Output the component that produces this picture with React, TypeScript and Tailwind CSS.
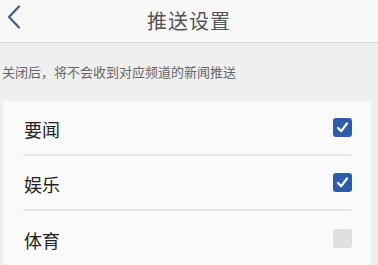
const channels = [
  { name: "要闻", on: true },
  { name: "娱乐", on: true },
  { name: "体育", on: false },
];

const font = {
  fontFamily: '"Noto Sans CJK SC", "Noto Sans", sans-serif',
};

export default function App() {
  return (
    <div className="w-[378px] h-[265px] overflow-hidden bg-[#efefef]" style={font}>
      <div className="relative h-[43px] bg-[#f8f8f8] border-b border-[#d6d6d6] flex items-center justify-center">
        <svg className="absolute left-[6px] top-[5px]" width="16" height="24" viewBox="0 0 16 24">
          <path d="M13 1.5 L3 12 L13 22.5" fill="none" stroke="#3d5f86" strokeWidth="2.2" strokeLinecap="round" strokeLinejoin="round" />
        </svg>
        <span className="text-[20px] text-[#555] tracking-[1px] leading-none">推送设置</span>
      </div>
      <div className="h-[58px] flex items-center pl-[2px] text-[13px] text-[#666]">
        关闭后，将不会收到对应频道的新闻推送
      </div>
      <div className="ml-[3px] w-[368px] bg-[#fafafa] px-[20px]">
        {channels.map((c, i) => (
          <div
            key={c.name}
            className={
              "h-[55px] flex items-center justify-between " +
              (i < channels.length - 1 ? "border-b-2 border-[#e6e6e6]" : "")
            }
          >
            <span className="text-[18px] text-[#222] leading-none pl-[1px] pt-[2px]">{c.name}</span>
            {c.on ? (
              <div className="w-[19px] h-[19px] rounded-[3px] bg-[#2d5cab] flex items-center justify-center -mr-[1px]">
                <svg width="13" height="13" viewBox="0 0 13 13">
                  <path d="M2 7 L5.2 10.2 L11 2.5" fill="none" stroke="#fff" strokeWidth="2.2" strokeLinecap="round" strokeLinejoin="round" />
                </svg>
              </div>
            ) : (
              <div className="w-[19px] h-[19px] rounded-[3px] bg-[#e0e0e0] -mr-[1px]" />
            )}
          </div>
        ))}
      </div>
    </div>
  );
}
